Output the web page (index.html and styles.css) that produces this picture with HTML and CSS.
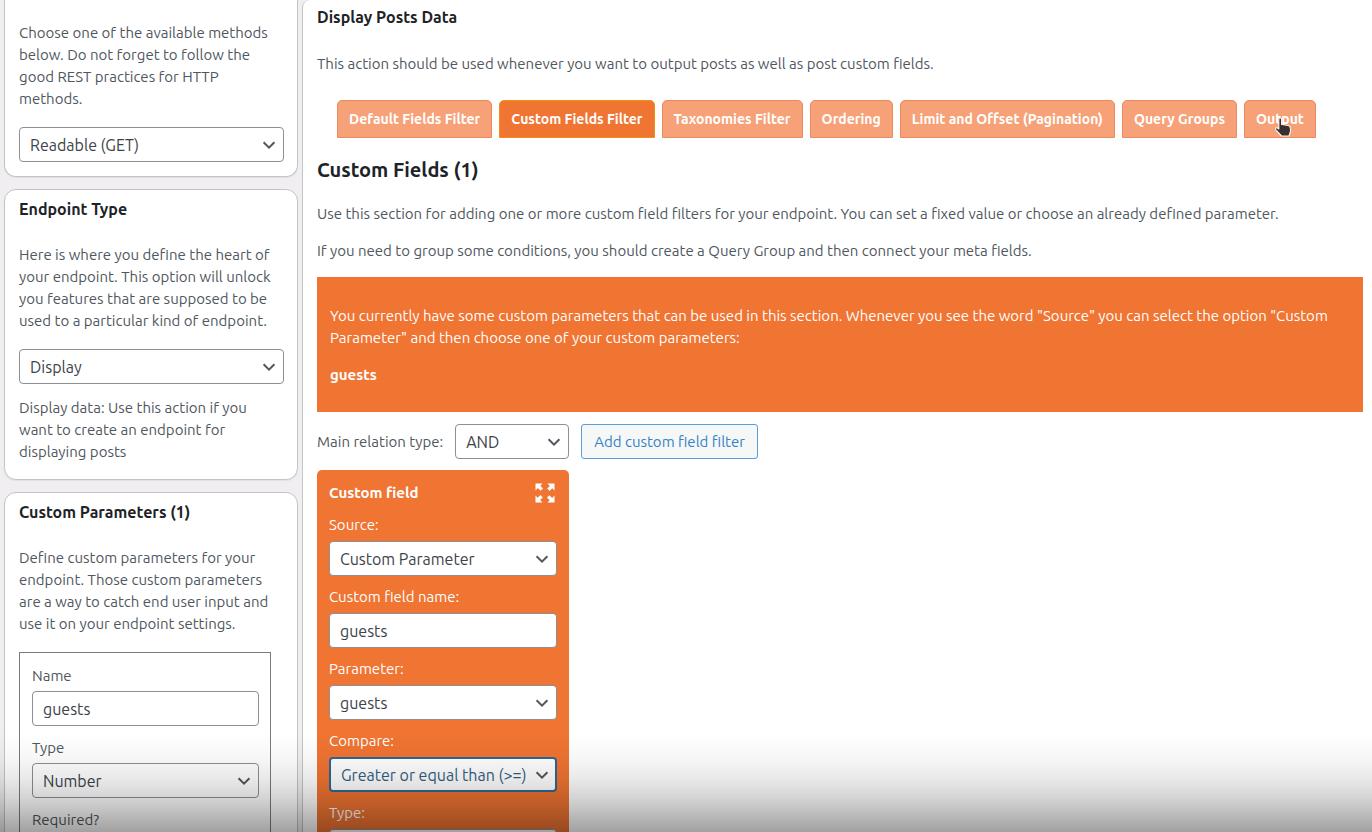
FILE: index.html
```html
<!DOCTYPE html>
<html lang="en">
<head>
<meta charset="utf-8">
<title>Endpoint settings</title>
<link rel="stylesheet" href="styles.css">
</head>
<body>
<svg class="defs" aria-hidden="true">
  <symbol id="chevron" viewBox="0 0 16 16"><path d="M2.6 5.2 8 10.6l5.400-5.400" fill="none" stroke="currentColor" stroke-width="2"/></symbol>
</svg>
<div class="page">
  <aside class="sidebar">
    <section class="card card-first">
      <p>Choose one of the available methods below. Do not forget to follow the good REST practices for HTTP methods.</p>
      <span class="select"><select aria-label="Method"><option>Readable (GET)</option></select><svg><use href="#chevron"/></svg></span>
    </section>
    <section class="card">
      <h2>Endpoint Type</h2>
      <p>Here is where you define the heart of your endpoint. This option will unlock you features that are supposed to be used to a particular kind of endpoint.</p>
      <span class="select"><select aria-label="Endpoint type"><option>Display</option></select><svg><use href="#chevron"/></svg></span>
      <p class="note">Display data: Use this action if you want to create an endpoint for displaying posts</p>
    </section>
    <section class="card card-last">
      <h2>Custom Parameters (1)</h2>
      <p>Define custom parameters for your endpoint. Those custom parameters are a way to catch end user input and use it on your endpoint settings.</p>
      <div class="param">
        <label for="p-name">Name</label>
        <input id="p-name" type="text" value="guests">
        <label for="p-type">Type</label>
        <span class="select"><select id="p-type"><option>Number</option></select><svg><use href="#chevron"/></svg></span>
        <label for="p-req">Required?</label>
        <span class="select"><select id="p-req"><option>Yes</option></select><svg><use href="#chevron"/></svg></span>
      </div>
    </section>
  </aside>
  <main class="panel">
    <h2>Display Posts Data</h2>
    <p class="intro">This action should be used whenever you want to output posts as well as post custom fields.</p>
    <nav class="tabs">
      <button type="button">Default Fields Filter</button>
      <button type="button" class="active">Custom Fields Filter</button>
      <button type="button">Taxonomies Filter</button>
      <button type="button">Ordering</button>
      <button type="button">Limit and Offset (Pagination)</button>
      <button type="button">Query Groups</button>
      <button type="button">Output
        <svg class="pointer" viewBox="0 0 18 20" aria-hidden="true"><path d="M4.800 2.500c0-1 .6-1.500 1.400-1.500s1.400.6 1.400 1.500V7.500l6.400 1c1.600.3 2.500 1.300 2.500 3v3L15 19H7.500L1.800 12.800c-.9-1.200.4-2.600 1.700-1.800l1.300.9z" fill="#37302f" stroke="#fff0e6" stroke-width="1.200" stroke-linejoin="round"/></svg>
      </button>
    </nav>
    <h1>Custom Fields (1)</h1>
    <p class="lead">Use this section for adding one or more custom field filters for your endpoint. You can set a fixed value or choose an already defined parameter.</p>
    <p class="lead">If you need to group some conditions, you should create a Query Group and then connect your meta fields.</p>
    <div class="banner">
      <p>You currently have some custom parameters that can be used in this section. Whenever you see the word "Source" you can select the option "Custom Parameter" and then choose one of your custom parameters:</p>
      <p><strong>guests</strong></p>
    </div>
    <div class="relation">
      <label for="relation">Main relation type:</label>
      <span class="select"><select id="relation"><option>AND</option></select><svg><use href="#chevron"/></svg></span>
      <button type="button" class="add">Add custom field filter</button>
    </div>
    <section class="field">
      <header>
        <h3>Custom field</h3>
        <button type="button" class="expand" aria-label="Expand">
          <svg viewBox="0 0 20 20"><g id="arrow"><path d="M.5.500h7L5.300 2.700 8 5.400 5.600 7.800 2.900 5.100.500 7.500z" fill="#fff"/></g><use href="#arrow" transform="rotate(90 10 10)"/><use href="#arrow" transform="rotate(180 10 10)"/><use href="#arrow" transform="rotate(270 10 10)"/></svg>
        </button>
      </header>
      <label for="f-source">Source:</label>
      <span class="select"><select id="f-source"><option>Custom Parameter</option></select><svg><use href="#chevron"/></svg></span>
      <label for="f-name">Custom field name:</label>
      <input id="f-name" type="text" value="guests">
      <label for="f-param">Parameter:</label>
      <span class="select"><select id="f-param"><option>guests</option></select><svg><use href="#chevron"/></svg></span>
      <label for="f-compare">Compare:</label>
      <span class="select focused"><select id="f-compare"><option>Greater or equal than (&gt;=)</option></select><svg><use href="#chevron"/></svg></span>
      <label for="f-type">Type:</label>
      <span class="select"><select id="f-type"><option>Numeric</option></select><svg><use href="#chevron"/></svg></span>
    </section>
  </main>
</div>
<div class="shade"></div>
</body>
</html>
```
FILE: styles.css
```css
* { box-sizing: border-box; }
body {
  margin: 0;
  background: #f0eef1;
  color: #50575e;
  font: 15px/22px "Ubuntu", "Noto Sans", sans-serif;
}
h1, h2, h3, p { margin: 0; }
h1, h2 { color: #1d2327; }
h2 { font-size: 16px; line-height: 22px; }
.defs { position: absolute; width: 0; height: 0; }
.page {
  display: grid;
  grid-template-columns: 294px minmax(0, 1fr);
  gap: 4px;
  height: 100vh;
  padding-left: 4px;
  overflow: hidden;
}
.sidebar { display: flex; flex-direction: column; gap: 12px; }
.card {
  flex: none;
  padding: 8px 13px 16px 14px;
  border: 1px solid #c3c4c7;
  border-radius: 12px;
  background: #fff;
  box-shadow: 0 1px 1px rgba(0, 0, 0, .06);
}
.card-first { padding-top: 22px; padding-bottom: 14px; border-top: 0; border-radius: 0 0 12px 12px; }
.card h2 { margin-bottom: 24px; }
.card > p { margin: 0 8px 17px 0; }
.card > .note { margin: 13px 8px 0 0; }

input, select, button { font-family: inherit; }
input, select {
  width: 100%;
  height: 35px;
  padding: 0 10px;
  border: 1px solid #8c8f94;
  border-radius: 4px;
  background: #fff;
  color: #3c434a;
  font-size: 16px;
  appearance: none;
}
.select { display: grid; align-items: center; color: #50575e; }
.select > * { grid-area: 1 / 1; }
.select svg { justify-self: end; width: 16px; height: 16px; margin-right: 7px; pointer-events: none; }

.param {
  display: grid;
  margin-right: 13px;
  padding: 12px 11px 12px 12px;
  border: 1px solid #787c82;
}
.param label { margin-bottom: 4px; }
.param input, .param .select { margin-bottom: 11px; }

.panel {
  padding: 6px 9px 0 14px;
  border-left: 1px solid #c3c4c7;
  border-top-left-radius: 8px;
  background: #fff;
}
.intro { margin: 25px 0; }
.tabs { display: flex; gap: 7px; padding-left: 20px; }
.tabs button {
  position: relative;
  height: 38px;
  padding: 0 11px;
  border: 1px solid #ec8a5c;
  border-radius: 5px 5px 0 0;
  background: #f6a177;
  color: #fff;
  font-size: 14px;
  font-weight: 700;
  white-space: nowrap;
}
.tabs .active { background: #f07432; border-color: #f1910f; }
.pointer { position: absolute; left: 29px; top: 16px; width: 18px; height: 20px; }
h1 { margin: 20px 0 21px; font-size: 20px; line-height: 24px; }
.lead { margin-bottom: 15px; }
.banner { padding: 28px 13px 26px; background: #f07432; color: #fff; }
.banner p + p { margin-top: 15px; }
.relation { display: flex; align-items: center; gap: 12px; margin: 12px 0 11px; }
.relation .select { width: 114px; }
.add {
  height: 35px;
  padding: 0 12px;
  border: 1px solid #5b9dd9;
  border-radius: 3px;
  background: #f6f7f7;
  color: #3582c4;
  font-size: 15px;
}
.field {
  display: grid;
  width: 252px;
  padding: 12px 12px;
  border-radius: 5px;
  background: #f07432;
  color: #fff;
}
.field header { display: flex; justify-content: space-between; align-items: center; margin-bottom: 10px; }
h3 { font-size: 15px; }
.expand { height: 22px; padding: 1px; margin-right: 1px; border: 0; background: none; }
.expand svg { display: block; width: 20px; height: 20px; }
.field label { margin-bottom: 5px; }
.field input, .field .select { margin-bottom: 10px; }
.focused select { border: 2px solid #2d6896; color: #315f84; }

.shade {
  position: fixed;
  inset: auto 0 0;
  height: 98px;
  background: linear-gradient(transparent, rgba(0, 0, 0, .03) 24%, rgba(0, 0, 0, .09) 47%, rgba(0, 0, 0, .19) 69%, rgba(0, 0, 0, .37));
  pointer-events: none;
}
```
